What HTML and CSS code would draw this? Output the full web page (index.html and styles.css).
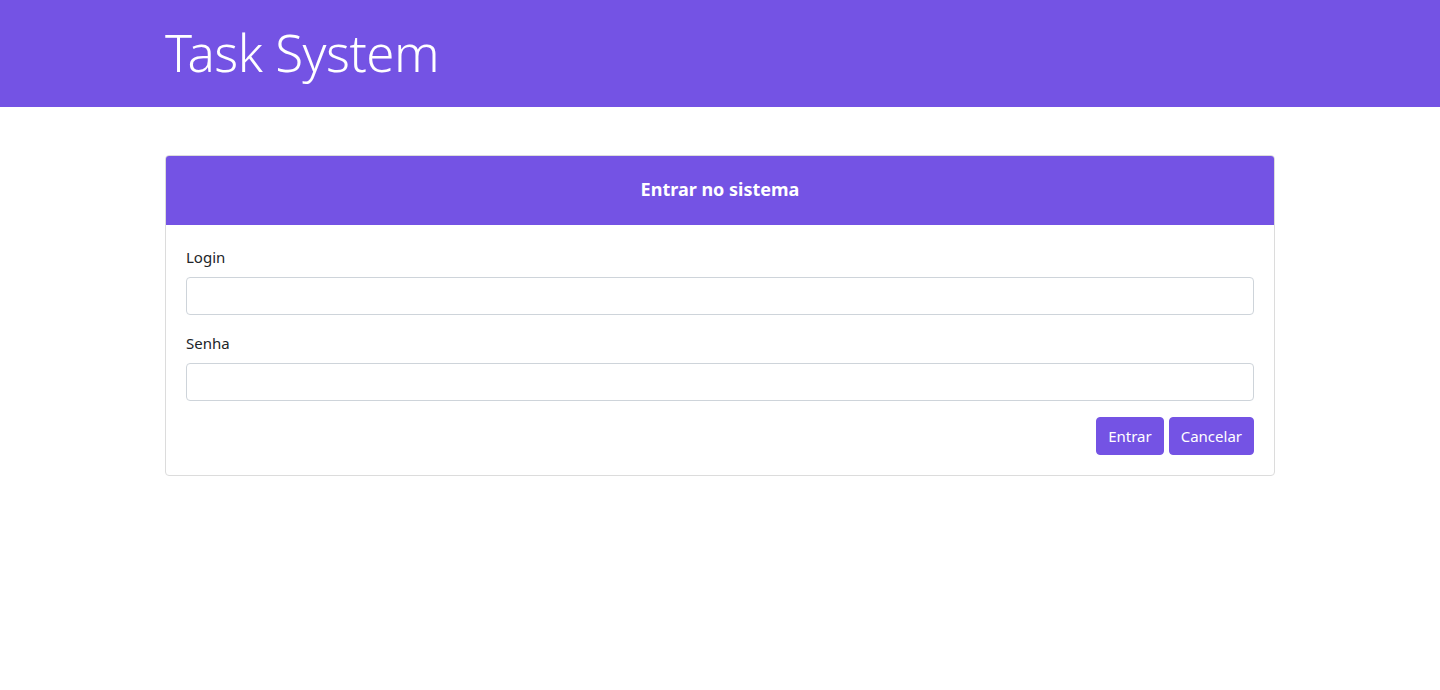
FILE: index.html
```html
<!DOCTYPE html>
<html lang="pt">
<head>
<meta charset="utf-8">
<title>Task System</title>
<link rel="stylesheet" href="styles.css">
</head>
<body>
<header class="topbar">
  <div class="container">
    <h1 class="brand">Task System</h1>
  </div>
</header>
<main class="container">
  <section class="card">
    <div class="card-header">Entrar no sistema</div>
    <form class="card-body">
      <div class="field">
        <label class="label" for="login">Login</label>
        <input class="input" id="login" type="text">
      </div>
      <div class="field">
        <label class="label" for="senha">Senha</label>
        <input class="input" id="senha" type="password">
      </div>
      <div class="actions">
        <button class="btn" type="submit">Entrar</button>
        <button class="btn" type="button">Cancelar</button>
      </div>
    </form>
  </section>
</main>
</body>
</html>
```
FILE: styles.css
```css
* { box-sizing: border-box; }
html, body { margin: 0; padding: 0; }
body {
  font-family: "Noto Sans", "Open Sans", "Liberation Sans", sans-serif;
  font-size: 16px;
  line-height: 1.5;
  color: #212529;
  background: #fff;
}
.container {
  width: 1140px;
  margin: 0 auto;
  padding: 0 15px;
}
.topbar {
  background: #7453e4;
  color: #fff;
  height: 107px;
}
.brand {
  margin: 0;
  padding-top: 19px;
  font-size: 51px;
  font-weight: 300;
  line-height: 67px;
  letter-spacing: -0.5px;
}
main.container { padding-top: 48px; }
.card {
  border: 1px solid #dcdcdc;
  border-radius: 4px;
  overflow: hidden;
}
.card-header {
  background: #7453e4;
  color: #fff;
  text-align: center;
  font-weight: 700;
  font-size: 18px;
  height: 69px;
  display: flex;
  align-items: center;
  justify-content: center;
  padding-bottom: 2px;
}
.card-body {
  padding: 20px;
  display: flex;
  flex-direction: column;
  gap: 16px;
  margin: 0;
}
.field { display: flex; flex-direction: column; gap: 8px; }
.label { font-size: 15px; line-height: 24px; }
.input {
  height: 38px;
  border: 1px solid #ced4da;
  border-radius: 4px;
  padding: 6px 12px;
  font: inherit;
}
.actions {
  display: flex;
  justify-content: flex-end;
  gap: 5px;
}
.btn {
  height: 38px;
  background: #7453e4;
  color: #fff;
  border: 1px solid #7453e4;
  border-radius: 4px;
  padding: 0 11px;
  font-family: inherit;
  font-size: 15px;
  cursor: pointer;
}
```
